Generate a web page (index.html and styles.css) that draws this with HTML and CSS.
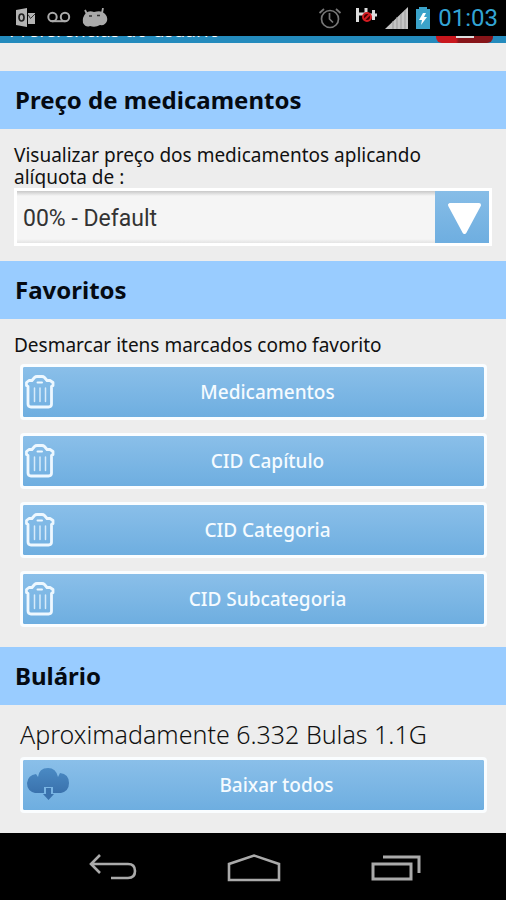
FILE: index.html
```html
<!DOCTYPE html>
<html lang="pt-BR">
<head>
<meta charset="utf-8">
<meta name="viewport" content="width=device-width, initial-scale=1">
<title>Preferências do usuário</title>
<link rel="stylesheet" href="styles.css">
</head>
<body>
<svg class="defs" width="0" height="0" aria-hidden="true">
  <symbol id="trash" viewBox="0 0 30 36">
    <g fill="none" stroke="#eef8ff" stroke-linejoin="round" stroke-linecap="round">
      <path stroke-width="2.800" d="M3 12.500 1.500 11.500V8.500L4 6.500H7L9.500 3.500Q10.500 2.500 12 2.500H17Q18.500 2.500 19.500 3.500L22 6.500H25L28 8.500V11.500L26.500 12.500V30Q26.500 33 23.500 33H6Q3 33 3 30Z"/>
      <path stroke-width="2" d="M12.500 8.500H17"/>
      <path stroke-width="1.500" opacity=".8" d="M9.500 14V27.500M15 14V27.500M20.500 14V27.500"/>
    </g>
  </symbol>
</svg>

<div class="status">
  <div class="status-group notices">
    <svg width="20" height="20" viewBox="0 0 20 20" aria-hidden="true">
      <path fill="#b3b3b3" d="M0 2 11 0V19L0 17ZM12 5H19V16H12Z"/>
      <ellipse cx="5.500" cy="9.500" rx="2.500" ry="3.500" fill="none" stroke="#222" stroke-width="1.700"/>
      <path d="M12 6.500 14.500 10.500 19 6" fill="none" stroke="#333"/>
    </svg>
    <svg width="24" height="20" viewBox="0 0 24 20" aria-hidden="true">
      <g fill="none" stroke="#aaa" stroke-width="2"><circle cx="5.500" cy="9" r="4.200"/><circle cx="18" cy="9" r="4.200"/><path d="M5 13.200H18.500"/></g>
    </svg>
    <svg width="26" height="20" viewBox="0 0 26 20" aria-hidden="true">
      <path d="M3 2 5 6M21 0 20 5" stroke="#aaa" stroke-width="1.800"/>
      <path fill="#aaa" d="M4 5Q7 2 12 4Q19 2 22 5Q26 8 25 13Q23 18 18 17Q13 20 8 18Q4 20 1 15Q0 9 4 5Z"/>
      <path d="M7 8H10M15 7.500H18" stroke="#333" stroke-width="1.400"/>
    </svg>
  </div>
  <div class="status-group system">
    <svg width="24" height="22" viewBox="0 0 24 22" aria-hidden="true">
      <g fill="none" stroke="#777" stroke-width="1.700"><circle cx="12" cy="12" r="8.500"/><path d="M11.500 6V12L15 15.500M1.500 6 6 2M18 2 22.500 6"/></g>
    </svg>
    <svg class="data" width="24" height="22" viewBox="0 0 24 22" aria-hidden="true">
      <path d="M3.500 6V20M12 6V17M4 12H12M16 13H23M19.500 8V18" fill="none" stroke="#ddd" stroke-width="3"/>
      <circle cx="13" cy="15" r="4" fill="#400" stroke="#d51c22" stroke-width="2"/><path d="M10 18 16 12" stroke="#d51c22" stroke-width="2"/>
    </svg>
    <svg width="23" height="24" viewBox="0 0 23 24" aria-hidden="true">
      <path fill="#c4c4c4" d="M0 23 23 1V23Z"/><path d="M8 15V23M12 11V23M16 8V23M20 4V23" stroke="#999"/>
    </svg>
    <svg width="16" height="24" viewBox="0 0 16 24" aria-hidden="true">
      <path fill="#3ba3ca" d="M4 1H12V3H15V23H1V3H4Z"/><path fill="#fff" d="M8 7 4 14H7L6 19 12 11H9L11 7Z"/>
    </svg>
    <time class="clock">01:03</time>
  </div>
</div>

<header class="appbar">
  <h1>Preferências do usuário</h1>
  <button class="badge" type="button" aria-label="Menu"><span></span></button>
</header>

<main>
  <section>
    <h2>Preço de medicamentos</h2>
    <div class="price">
      <label for="rate">Visualizar preço dos medicamentos aplicando alíquota de :</label>
      <div class="picker">
        <select id="rate"><option>00% - Default</option></select>
        <svg class="arrow" viewBox="0 0 54 52" aria-hidden="true"><path d="M15 14H44L29.500 41Z" fill="#fff" stroke="#fff" stroke-width="4" stroke-linejoin="round"/></svg>
      </div>
    </div>
  </section>
  <section>
    <h2>Favoritos</h2>
    <div class="favorites">
      <p>Desmarcar itens marcados como favorito</p>
      <div class="actions">
        <button class="action" type="button"><svg class="icon"><use href="#trash"/></svg>Medicamentos</button>
        <button class="action" type="button"><svg class="icon"><use href="#trash"/></svg>CID Capítulo</button>
        <button class="action" type="button"><svg class="icon"><use href="#trash"/></svg>CID Categoria</button>
        <button class="action" type="button"><svg class="icon"><use href="#trash"/></svg>CID Subcategoria</button>
      </div>
    </div>
  </section>
  <section>
    <h2>Bulário</h2>
    <div class="leaflets">
      <p>Aproximadamente 6.332 Bulas 1.1G</p>
      <div class="actions">
        <button class="action download" type="button">
          <svg class="icon cloud" viewBox="0 0 44 34" aria-hidden="true">
            <defs><linearGradient id="deep" x2="0" y2="1"><stop stop-color="#4a8ac4"/><stop offset="1" stop-color="#3a72ad"/></linearGradient></defs>
            <path fill="url(#deep)" d="M9 26Q1 24 1 16Q2 8 10 7L12 10Q13 1 22 1Q30 1 32 10L34 6Q43 7 43 16Q43 24 35 26H27V20H18V26Z"/>
            <path fill="#3a72ad" d="M20 21H25V27H28L22.500 33 17 27H20Z"/>
          </svg>Baixar todos</button>
      </div>
    </div>
  </section>
</main>

<nav>
  <button type="button" aria-label="Voltar"><svg width="48" height="28" viewBox="0 0 48 28"><path d="M11 1 2 10 11 19M3 10H39Q46 10 46 17Q46 24 39 24H22" fill="none" stroke="#aaa" stroke-width="2.600"/></svg></button>
  <button type="button" aria-label="Início"><svg width="54" height="28" viewBox="0 0 54 28"><path d="M2 26V10L27 1.500 52 10V26Z" fill="none" stroke="#aaa" stroke-width="2.600"/></svg></button>
  <button type="button" aria-label="Recentes"><svg width="50" height="28" viewBox="0 0 50 28"><path d="M2 10H40V25H2ZM12 3H48V19" fill="none" stroke="#aaa" stroke-width="3"/></svg></button>
</nav>
</body>
</html>
```
FILE: styles.css
```css
* { box-sizing: border-box; }
body {
  margin: 0;
  min-height: 100vh;
  display: flex;
  flex-direction: column;
  background: #ededed;
  color: #111;
  font-family: "Noto Sans", "Open Sans", sans-serif;
}
h1, h2, p { margin: 0; }
button { font: inherit; border: 0; padding: 0; cursor: pointer; }
svg { display: block; flex: none; }
.defs { position: absolute; }

.status {
  height: 36px;
  background: #000;
  display: flex;
  justify-content: space-between;
  align-items: center;
  padding: 0 8px 0 16px;
}
.status-group { display: flex; align-items: center; }
.notices { gap: 11px; }
.system { gap: 7px; }
.system .data { align-self: flex-start; margin: 0 0 0 5px; }
.clock { font: 24px/32px Roboto, sans-serif; color: #33a5d5; }

.appbar {
  height: 7px;
  overflow: hidden;
  display: flex;
  justify-content: space-between;
  align-items: flex-end;
  padding: 0 13px 0 9px;
  background: #248bbd;
}
.appbar h1 { font-size: 19px; line-height: 26px; font-weight: 400; color: #fff; }
.badge {
  display: flex;
  justify-content: center;
  align-items: flex-end;
  width: 57px;
  height: 28px;
  padding-bottom: 5px;
  border-radius: 6px;
  background: linear-gradient(90deg, #c9171d 35%, #871519 40%);
}
.badge span { width: 18px; height: 14px; background: #ddd; }

main { flex: 1; padding-top: 28px; }
h2 {
  padding: 0 15px;
  background: #99ccff;
  color: #050a12;
  font-size: 24px;
  line-height: 58px;
  font-weight: 700;
}
.price { padding: 15px 14px; }
.price label { display: block; font-size: 19px; line-height: 22px; }
.picker {
  position: relative;
  height: 58px;
  border: 3px solid #fff;
  background: #f5f5f5;
}
.picker select {
  display: block;
  width: 100%;
  height: 100%;
  padding: 2px 60px 0 6px;
  border: 0;
  appearance: none;
  background: linear-gradient(#c8c8c8, #f5f5f5 5px, #f5f5f5 48px, #e4e4e4);
  color: #333;
  font: 23px Roboto, sans-serif;
}
.arrow {
  position: absolute;
  top: 0;
  right: 0;
  width: 54px;
  height: 100%;
  background: linear-gradient(#87bde7, #6eaee0);
  pointer-events: none;
}

.favorites { padding: 15px 14px 20px; }
.favorites p { font-size: 19px; line-height: 22px; }
.actions { display: flex; flex-direction: column; gap: 13px; padding: 8px 5px 0 6px; }
.leaflets { padding: 14px 14px 20px; }
.leaflets p { padding-left: 6px; font-size: 25px; line-height: 30px; font-weight: 300; }
.action {
  position: relative;
  height: 56px;
  border: 3px solid #fafdff;
  border-radius: 4px;
  background: linear-gradient(#8abfe9, #6eaee0) padding-box;
  color: #f5fbff;
  font-size: 19px;
  padding-left: 28px;
  font-weight: 500;
}
.download { padding-left: 46px; }
.icon { position: absolute; left: 2px; top: 7px; width: 30px; height: 36px; }
.cloud { left: 3px; width: 44px; height: 34px; }

nav {
  height: 67px;
  background: #000;
  display: flex;
  justify-content: center;
  align-items: center;
  gap: 90px;
  padding: 3px 0 0 4px;
}
nav button { background: none; }
```
